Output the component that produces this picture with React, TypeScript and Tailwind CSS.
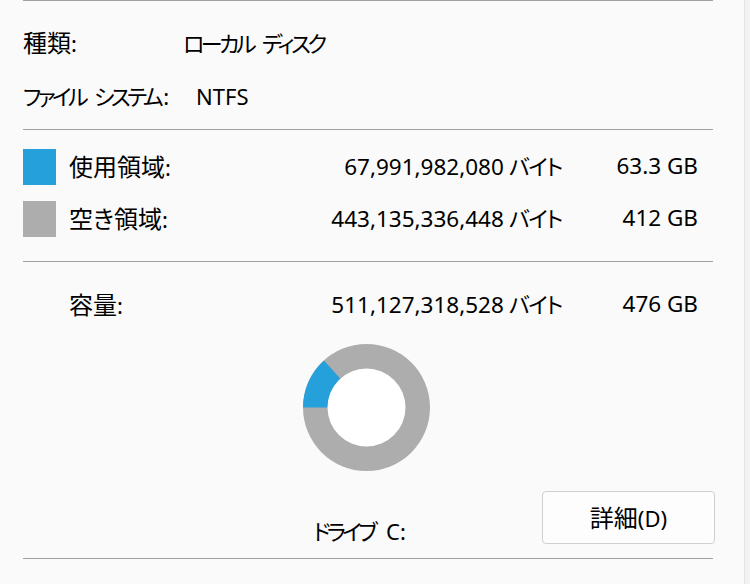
import React from "react";

const J = ({ children }: { children: React.ReactNode }) => (
  <span className="text-[24px] [font-feature-settings:'palt']">{children}</span>
);

const K = ({ children }: { children: React.ReactNode }) => (
  <span className="text-[22px] tracking-[-0.16em] [font-feature-settings:'palt']">
    {children}
  </span>
);

const Sp = () => <span className="inline-block w-[9px]" />;
const Colon = () => <span className="ml-[3px]">:</span>;

function Donut() {
  const size = 127;
  const c = size / 2;
  const r = c;
  const frac = 67991982080 / 511127318528;
  const a0 = Math.PI;
  const a1 = Math.PI + frac * 2 * Math.PI;
  const x0 = c + r * Math.cos(a0);
  const y0 = c + r * Math.sin(a0);
  const x1 = c + r * Math.cos(a1);
  const y1 = c + r * Math.sin(a1);
  const d = `M ${c} ${c} L ${x0} ${y0} A ${r} ${r} 0 0 1 ${x1} ${y1} Z`;
  return (
    <svg width={size} height={size} viewBox={`0 0 ${size} ${size}`}>
      <circle cx={c} cy={c} r={r} fill="#adadad" />
      <path d={d} fill="#26a0da" />
      <circle cx={c} cy={c} r={39} fill="#ffffff" />
    </svg>
  );
}

function Line() {
  return <div className="h-px w-[690px] bg-[#a0a0a0]" />;
}

function SpaceRow({
  color,
  label,
  bytes,
  gb,
}: {
  color?: string;
  label: React.ReactNode;
  bytes: string;
  gb: string;
}) {
  return (
    <div className="flex h-[37px] w-[675px] items-center">
      {color ? (
        <div className={`h-[36px] w-[33px] ${color}`} />
      ) : (
        <div className="w-[33px]" />
      )}
      <div className="ml-[13px] flex-1 whitespace-nowrap">
        {label}:
      </div>
      <div className="whitespace-nowrap text-right text-[22.5px]">
        {bytes}
        <span className="inline-block w-[5px]" />
        <span className="text-[22px] tracking-[-0.06em] [font-feature-settings:'palt']">
          バイト
        </span>
      </div>
      <div className="w-[136px] whitespace-nowrap text-right text-[22.5px]">{gb}</div>
    </div>
  );
}

export default function App() {
  return (
    <div className="flex h-[584px] w-[750px] overflow-hidden bg-[#fafafa] font-['Noto_Sans','Noto_Sans_CJK_JP',sans-serif] text-[22px] leading-none text-black">
      <div className="flex w-[744px] flex-col pl-[23px]">
        <Line />
        <div className="pt-[15px]">
          <div className="flex h-[54px] items-center whitespace-nowrap">
            <div className="w-[160px]">
              <J>種類</J>:
            </div>
            <div>
              <K>ローカル</K>
              <Sp />
              <K>ディスク</K>
            </div>
          </div>
          <div className="flex h-[52px] items-center whitespace-nowrap">
            <div className="mr-[27px]">
              <K>ファイル</K>
              <Sp />
              <K>システム</K>
              <Colon />
            </div>
            <div>NTFS</div>
          </div>
        </div>
        <div className="h-[7px]" />
        <Line />
        <div className="pt-[18px]">
          <SpaceRow
            color="bg-[#26a0da]"
            label={<J>使用領域</J>}
            bytes="67,991,982,080"
            gb="63.3 GB"
          />
          <div className="h-[15px]" />
          <SpaceRow
            color="bg-[#adadad]"
            label={<J>空き領域</J>}
            bytes="443,135,336,448"
            gb="412 GB"
          />
        </div>
        <div className="h-[24px]" />
        <Line />
        <div className="pt-[24px]">
          <SpaceRow label={<J>容量</J>} bytes="511,127,318,528" gb="476 GB" />
        </div>
        <div className="mt-[21px] pl-[280px]">
          <Donut />
        </div>
        <div className="mt-[20px] flex h-[53px] w-[692px] items-end">
          <div className="ml-[290px] h-[26px] whitespace-nowrap leading-[26px]">
            <K>ドライブ</K>
            <span className="inline-block w-[12px]" />
            C:
          </div>
          <button className="ml-auto flex h-[53px] w-[173px] items-center justify-center rounded-[4px] border border-[#d0d0d0] bg-[#fdfdfd]">
            <J>詳細</J>(D)
          </button>
        </div>
        <div className="mt-[14px]">
          <Line />
        </div>
      </div>
      <div className="w-[6px] border-l border-[#e3e3e3] bg-[#f2f2f2]" />
    </div>
  );
}
